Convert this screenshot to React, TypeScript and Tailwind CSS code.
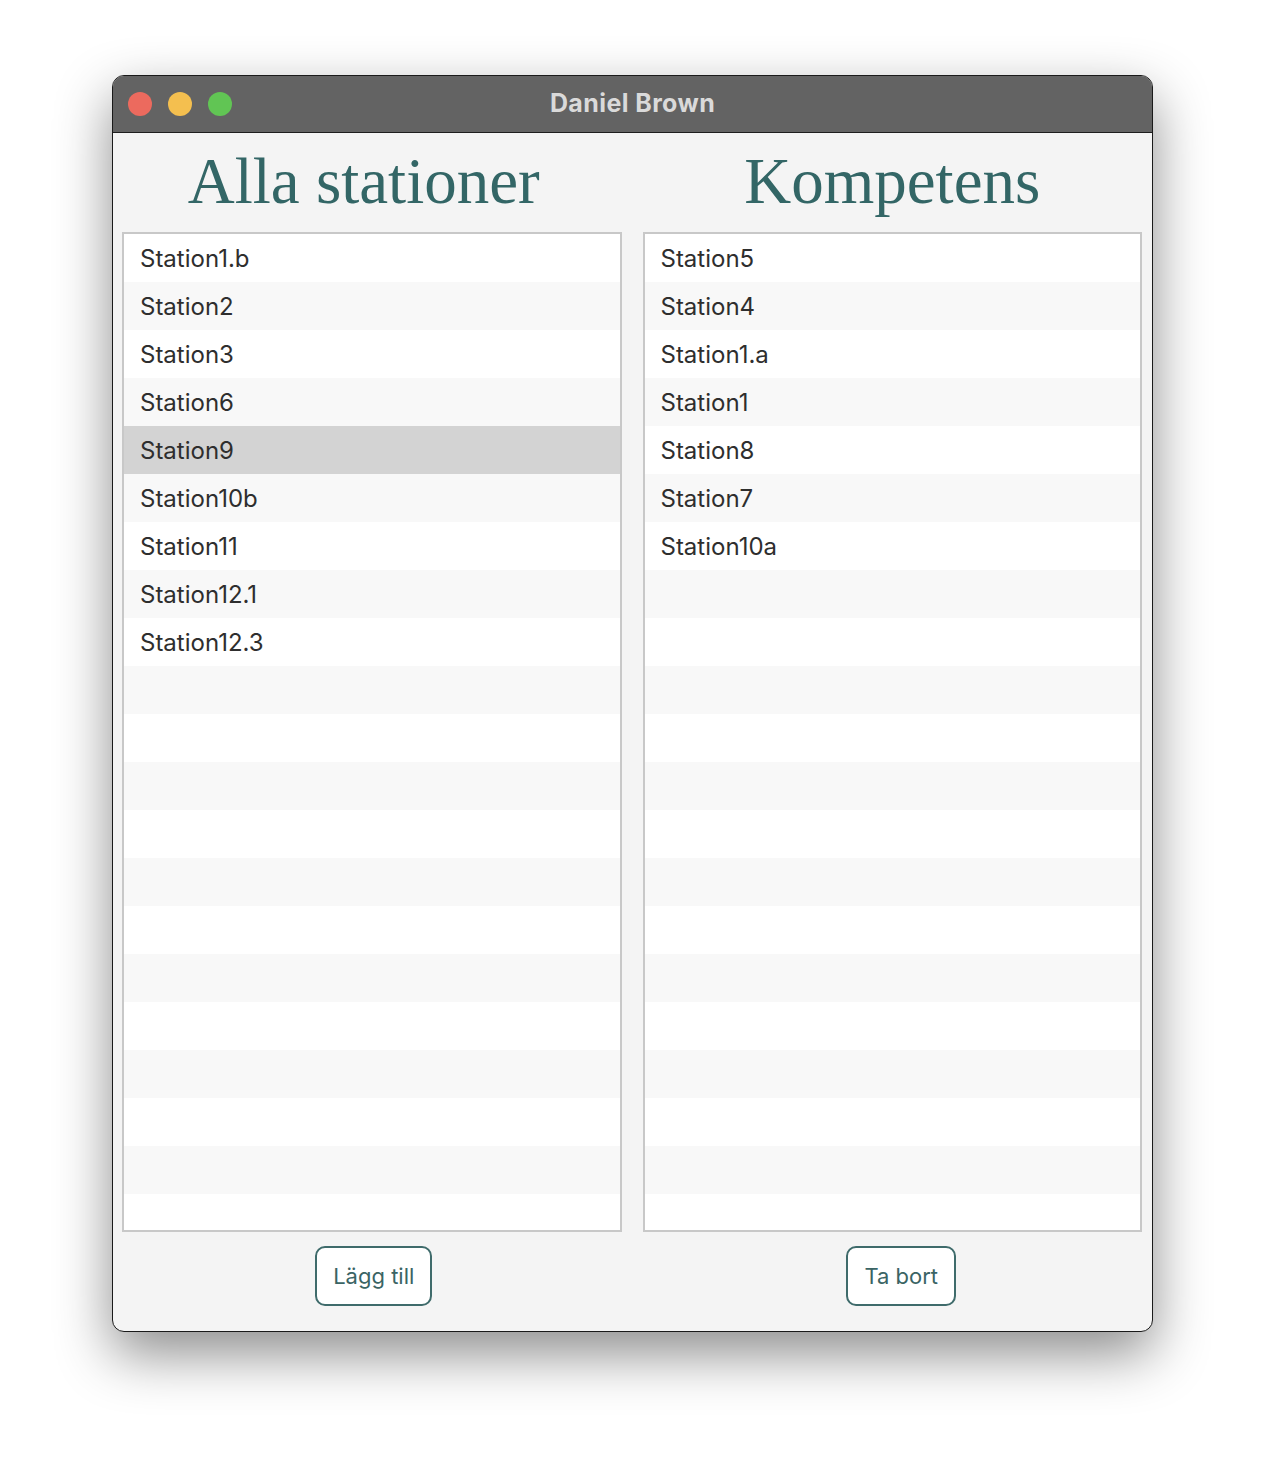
const left = [
  "Station1.b",
  "Station2",
  "Station3",
  "Station6",
  "Station9",
  "Station10b",
  "Station11",
  "Station12.1",
  "Station12.3",
];
const right = ["Station5", "Station4", "Station1.a", "Station1", "Station8", "Station7", "Station10a"];

const ROWS = 21;

function StationList({ items, selected }: { items: string[]; selected?: number }) {
  return (
    <div className="h-[1000px] border-2 border-[#c8c8c8] bg-white overflow-hidden">
      {Array.from({ length: ROWS }).map((_, i) => {
        const bg = i === selected ? "bg-[#d3d3d3]" : i % 2 === 1 ? "bg-[#f8f8f8]" : "bg-white";
        return (
          <div key={i} className={`h-12 shrink-0 flex items-center pl-4 pt-[2px] text-[24px] text-[#2e2e2e] ${bg}`}>
            {items[i] ?? ""}
          </div>
        );
      })}
    </div>
  );
}

export default function App() {
  return (
    <div className="w-[1264px] h-[1480px] bg-white pt-[75px] pl-[112px] font-['Inter',sans-serif]">
      <div className="w-[1041px] h-[1257px] rounded-[12px] border border-[#1a1a1a] overflow-hidden bg-[#f4f4f4] shadow-[0_22px_55px_rgba(0,0,0,0.45)] flex flex-col">
        <div className="h-[57px] bg-[#636363] border-b border-[#1e1e1e] flex items-center relative shrink-0">
          <div className="flex gap-4 pl-[15px]">
            <span className="w-6 h-6 rounded-full bg-[#ec6a5e]" />
            <span className="w-6 h-6 rounded-full bg-[#f4bf4f]" />
            <span className="w-6 h-6 rounded-full bg-[#61c554]" />
          </div>
          <div className="absolute inset-0 flex items-center justify-center text-[25px] font-bold text-[#dadada] tracking-[0.4px]">
            Daniel Brown
          </div>
        </div>
        <div className="flex-1 grid grid-cols-2 gap-[21px] pl-[9px] pr-[10px]">
          <div className="flex flex-col">
            <h1 className="h-[99px] flex items-center justify-center pr-4 font-['Liberation_Serif',serif] text-[65px] text-[#336666] leading-none pb-[2px]">
              Alla stationer
            </h1>
            <StationList items={left} selected={4} />
            <div className="flex justify-center pt-[14px] pl-[4px]">
              <button className="h-[60px] px-4 rounded-[10px] border-2 border-[#3f6b6b] bg-white text-[22px] text-[#3a6464]">
                Lägg till
              </button>
            </div>
          </div>
          <div className="flex flex-col">
            <h1 className="h-[99px] flex items-center justify-center font-['Liberation_Serif',serif] text-[65px] text-[#336666] leading-none pb-[2px]">
              Kompetens
            </h1>
            <StationList items={right} />
            <div className="flex justify-center pt-[14px] pl-[18px]">
              <button className="h-[60px] px-4 rounded-[10px] border-2 border-[#3f6b6b] bg-white text-[22px] text-[#3a6464]">
                Ta bort
              </button>
            </div>
          </div>
        </div>
      </div>
    </div>
  );
}
